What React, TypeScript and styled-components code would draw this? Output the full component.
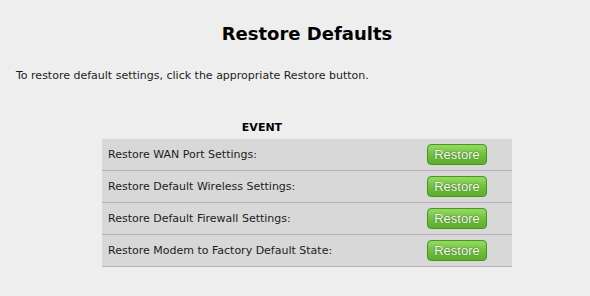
import React from "react";
import styled, { createGlobalStyle } from "styled-components";

const GlobalStyle = createGlobalStyle`
  html, body {
    margin: 0;
    padding: 0;
    background: #eeeeee;
  }
  body {
    font-family: "DejaVu Sans", Verdana, sans-serif;
    color: #1c1c1c;
  }
`;

const events = [
  "Restore WAN Port Settings:",
  "Restore Default Wireless Settings:",
  "Restore Default Firewall Settings:",
  "Restore Modem to Factory Default State:",
];

function App(): JSX.Element {
  return (
    <>
      <GlobalStyle />
      <Page>
        <Title>Restore Defaults</Title>
        <Intro>
          To restore default settings, click the appropriate Restore button.
        </Intro>
        <EventTable>
          <HeaderRow>
            <HeaderCell>EVENT</HeaderCell>
            <ActionHead />
          </HeaderRow>
          {events.map((label) => (
            <Row key={label}>
              <Label>{label}</Label>
              <Action>
                <RestoreButton type="button">Restore</RestoreButton>
              </Action>
            </Row>
          ))}
        </EventTable>
      </Page>
    </>
  );
}

const Page = styled.main`
  padding: 24px 0 0 24px;
  display: flex;
  flex-direction: column;
  align-items: center;
`;

const Title = styled.h1`
  margin: 0;
  font-size: 18px;
  font-weight: bold;
  color: #000;
  line-height: 20px;
`;

const Intro = styled.p`
  align-self: flex-start;
  margin: 25px 0 0 -8px;
  font-size: 11px;
  line-height: 14px;
`;

const EventTable = styled.section`
  width: 410px;
  margin-top: 32px;
`;

const HeaderRow = styled.div`
  display: flex;
  height: 24px;
  align-items: center;
`;

const HeaderCell = styled.div`
  width: 320px;
  text-align: center;
  font-size: 11px;
  font-weight: bold;
  color: #000;
`;

const ActionHead = styled.div`
  flex: 1;
`;

const Row = styled.div`
  display: flex;
  align-items: center;
  height: 31px;
  background: #d8d8d8;
  border-bottom: 1px solid #b4b4b4;
`;

const Label = styled.div`
  width: 320px;
  padding-left: 6px;
  box-sizing: border-box;
  font-size: 11px;
`;

const Action = styled.div`
  flex: 1;
  padding-left: 5px;
`;

const RestoreButton = styled.button`
  display: block;
  width: 60px;
  height: 21px;
  padding: 0;
  border: 1px solid #4a9426;
  border-radius: 4px;
  background: linear-gradient(#94da62, #72c13f 50%, #5cad2f);
  color: #fff;
  font-family: "Liberation Sans", Arial, sans-serif;
  font-size: 13px;
  text-shadow: 0 0 1px #2f6b12, 0 0 1px #2f6b12;
  cursor: pointer;
`;

export default App;
